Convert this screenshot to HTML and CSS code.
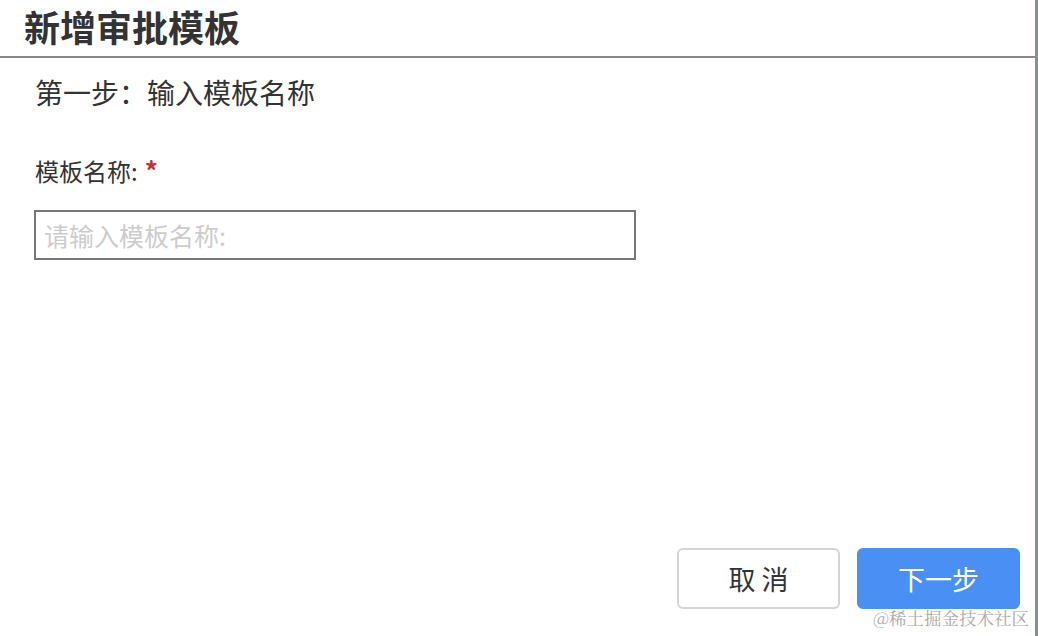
FILE: index.html
```html
<!DOCTYPE html>
<html lang="zh-CN">
<head>
    <meta charset="UTF-8">
    <title>新增审批模板</title>
    <link rel="stylesheet" href="styles.css">
</head>
<body>
    <div class="dialog">
        <header class="dialog-header">
            <h1>新增审批模板</h1>
        </header>

        <div class="dialog-body">
            <p class="step">第一步：输入模板名称</p>

            <div class="form-group">
                <label for="tplName">模板名称:<span class="required">*</span></label>
                <input type="text" id="tplName" placeholder="请输入模板名称:">
            </div>
        </div>

        <footer class="dialog-footer">
            <button class="btn btn-cancel">取 消</button>
            <button class="btn btn-primary">下一步</button>
        </footer>

        <div class="watermark">@稀土掘金技术社区</div>
    </div>
</body>
</html>
```

FILE: styles.css
```css
* {
    margin: 0;
    padding: 0;
    box-sizing: border-box;
}

body {
    font-family: "Noto Sans CJK SC", "Noto Sans", sans-serif;
    color: #333;
    background: #fff;
}

.dialog {
    position: relative;
    width: 1038px;
    height: 636px;
    border-right: 3px solid #8a9090;
    display: flex;
    flex-direction: column;
}

/* Header */
.dialog-header {
    height: 58px;
    padding-left: 24px;
    border-bottom: 2px solid #888;
}

.dialog-header h1 {
    font-size: 36px;
    font-weight: bold;
    line-height: 52px;
    color: #333;
}

/* Body */
.dialog-body {
    flex: 1;
    padding: 15px 0 0 35px;
}

.step {
    font-size: 28px;
    line-height: 38px;
    color: #333;
}

.form-group {
    margin-top: 42px;
}

label {
    display: block;
    font-size: 24px;
    line-height: 34px;
    color: #333;
}

.required {
    color: #c8302e;
    margin-left: 7px;
    font-size: 26px;
    font-weight: bold;
}

input {
    display: block;
    margin-top: 22px;
    margin-left: -1px;
    width: 602px;
    height: 50px;
    border: 2px solid #777;
    padding: 0 8px;
    font-family: inherit;
    font-size: 25px;
    outline: none;
}

input::placeholder {
    color: #ccc;
}

/* Footer */
.dialog-footer {
    display: flex;
    justify-content: flex-end;
    gap: 17px;
    padding: 0 15px 27px 0;
}

.btn {
    width: 163px;
    height: 61px;
    border-radius: 6px;
    font-family: inherit;
    font-size: 27px;
    cursor: pointer;
}

.btn-cancel {
    background: #fff;
    border: 2px solid #d4d4d4;
    color: #333;
}

.btn-primary {
    background: #4a8ff3;
    border: none;
    color: #fff;
}

.watermark {
    position: absolute;
    right: 6px;
    bottom: 6px;
    font-family: "Noto Serif CJK SC", "Noto Sans CJK SC", serif;
    font-size: 17.5px;
    color: #aaa;
}
```
